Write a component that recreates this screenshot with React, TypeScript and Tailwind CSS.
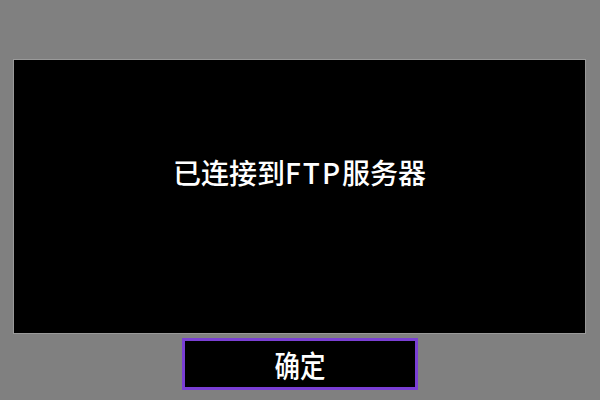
export default function App() {
  return (
    <main
      className="flex h-[400px] w-[600px] flex-col bg-[#808080] px-[14px] pt-[60px]"
      style={{ fontFamily: '"Noto Sans CJK SC", "Noto Sans", sans-serif' }}
    >
      <section className="flex h-[273px] w-[571px] items-center justify-center bg-black pb-[50px] shadow-[0_0_0_1px_#9a9a9a]">
        <p className="text-[28px] font-medium leading-none text-white">
          已连接到<span className="tracking-[2px]">FTP</span>服务器
        </p>
      </section>
      <button className="mx-auto mt-[5px] flex h-[52px] w-[236px] items-center justify-center border-[3px] border-[#7a3fd4] bg-black">
        <span className="inline-block scale-x-[0.85] text-[30px] font-medium leading-none text-white">
          确定
        </span>
      </button>
    </main>
  );
}
